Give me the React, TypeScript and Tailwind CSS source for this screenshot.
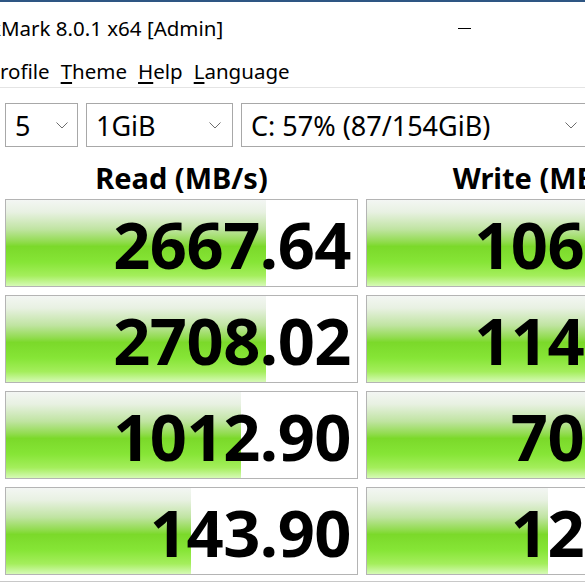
import React from "react";

const font = { fontFamily: '"Noto Sans", "Open Sans", sans-serif' };

const Chevron: React.FC = () => (
  <svg width="12" height="7" viewBox="0 0 12 7" fill="none">
    <polyline points="0.5,0.5 6,6 11.5,0.5" stroke="#6d6d6d" strokeWidth="1" />
  </svg>
);

const Dropdown: React.FC<{ label: string; width: string; chevronPad: string }> = ({
  label,
  width,
  chevronPad,
}) => (
  <div
    className={`${width} h-[44px] shrink-0 border border-[#a8a8a8] bg-white flex items-center justify-between pl-[9px] ${chevronPad}`}
  >
    <span className="text-[27px] leading-none text-black">{label}</span>
    <Chevron />
  </div>
);

// bar width in px inside a 351px cell
const rows = [
  { read: "2667.64", readBar: 260, write: "1064.27", writeBar: 351 },
  { read: "2708.02", readBar: 260, write: "1147.51", writeBar: 351 },
  { read: "1012.90", readBar: 235, write: "703.52", writeBar: 351 },
  { read: "143.90", readBar: 185, write: "125.48", writeBar: 181 },
];

const greenBar =
  "bg-[linear-gradient(to_bottom,#f3f6f3_0%,#e8f1e2_14%,#c0e4a2_34%,#93dc52_48%,#7bd92a_54%,#86e536_72%,#a4ee5c_88%,#d6fab6_100%)]";

const ResultCell: React.FC<{ value: string; bar: number }> = ({ value, bar }) => (
  <div className="relative w-[353px] h-[88px] shrink-0 border border-[#b4b4b4] bg-white overflow-hidden">
    <div className={`absolute left-0 top-0 bottom-0 ${greenBar}`} style={{ width: bar }} />
    <div className="relative h-full flex items-center justify-end pr-[6px] pt-[3px]">
      <span className="text-[65px] font-bold leading-none text-black tracking-[-0.5px]">{value}</span>
    </div>
  </div>
);

const App: React.FC = () => {
  return (
    <div className="w-[585px] h-[585px] bg-white overflow-hidden relative" style={font}>
      {/* window top edge */}
      <div className="h-[2px] bg-[#2e5683]" />

      {/* title bar */}
      <div className="h-[53px] flex items-center">
        <span className="ml-[-10px] text-[20.5px] text-black whitespace-nowrap">kMark 8.0.1 x64 [Admin]</span>
        <div className="ml-auto mr-[114px] w-[13px] h-px bg-black" />
      </div>

      {/* menu */}
      <div className="h-[33px] flex items-center gap-[11px] border-b border-[#e4e4e4] text-[20.5px] text-black whitespace-nowrap">
        <span>rofile</span>
        <span>
          <span className="underline underline-offset-[3px]">T</span>heme
        </span>
        <span>
          <span className="underline underline-offset-[3px]">H</span>elp
        </span>
        <span>
          <span className="underline underline-offset-[3px]">L</span>anguage
        </span>
      </div>

      {/* selectors */}
      <div className="flex gap-[8px] pl-[5px] pt-[15px] w-[800px]">
        <Dropdown label="5" width="w-[73px]" chevronPad="pr-[9px]" />
        <Dropdown label="1GiB" width="w-[147px]" chevronPad="pr-[11px]" />
        <Dropdown label="C: 57% (87/154GiB)" width="w-[348px]" chevronPad="pr-[11px]" />
      </div>

      {/* column headers */}
      <div className="flex gap-[8px] pl-[5px] w-[800px] h-[52px] items-end">
        <div className="w-[353px] text-center text-[29px] font-bold text-black">Read (MB/s)</div>
        <div className="w-[353px] text-center text-[29px] font-bold text-black">Write (MB/s)</div>
      </div>

      {/* results */}
      <div className="flex flex-col gap-[8px] pl-[5px] w-[800px]">
        {rows.map((r) => (
          <div key={r.read} className="flex gap-[8px]">
            <ResultCell value={r.read} bar={r.readBar} />
            <ResultCell value={r.write} bar={r.writeBar} />
          </div>
        ))}
      </div>

      {/* comment box edge */}
      <div className="mt-[6px] h-px bg-[#c8c8c8] w-full" />
    </div>
  );
};

export default App;
